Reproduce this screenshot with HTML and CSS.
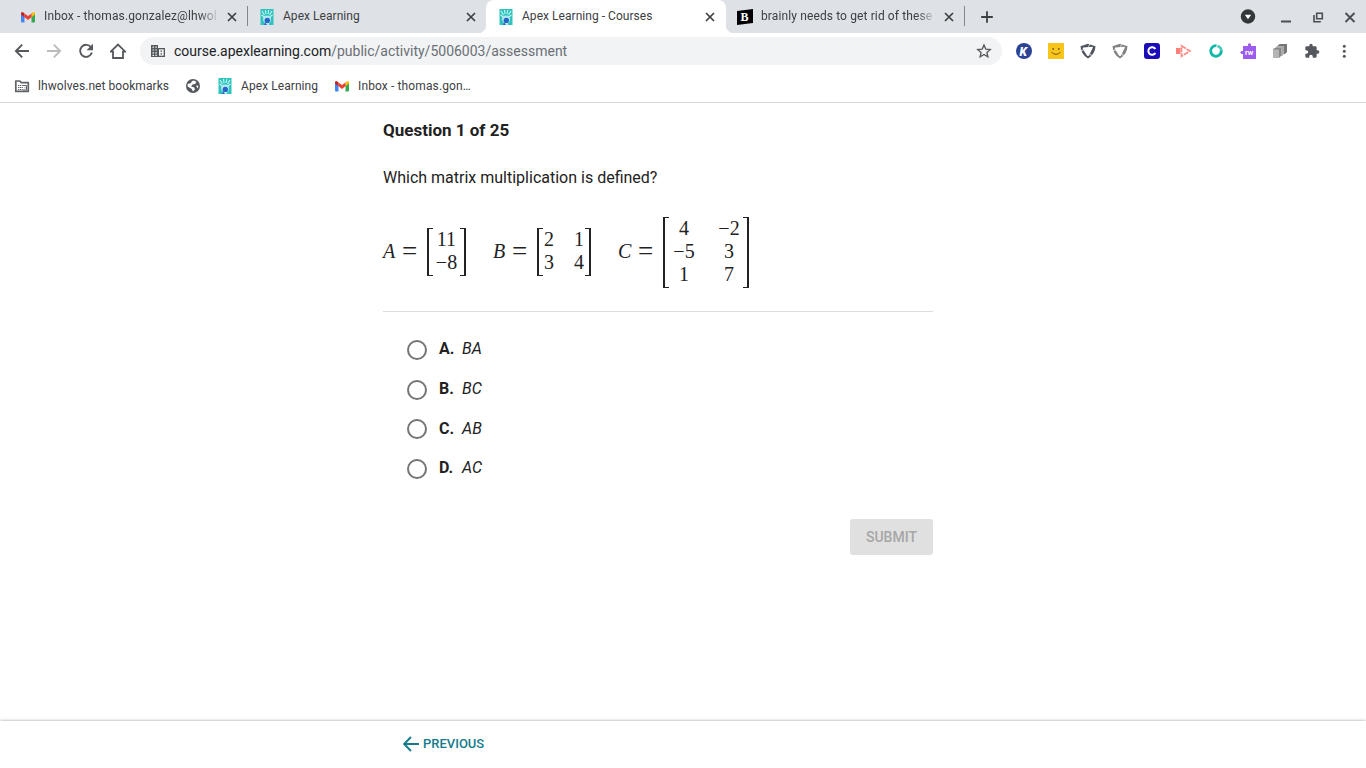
FILE: index.html
```html
<!DOCTYPE html>
<html lang="en">
<head>
  <meta charset="UTF-8" />
  <meta name="viewport" content="width=device-width, initial-scale=1.0" />
  <title>Apex Learning - Courses</title>
  <link rel="stylesheet" href="styles.css">
</head>
<body>

  <!-- Shared icons -->
  <svg class="icon-defs" width="0" height="0">
    <symbol id="close" viewBox="0 0 16 16">
      <path d="M4 4l8 8M12 4l-8 8" fill="none" stroke="currentColor" stroke-width="1.7" />
    </symbol>
    <symbol id="gmail" viewBox="0 0 16 16">
      <path d="M1 4.500v8q0 1 1 1h2.500V6.600z" fill="#4285f4" />
      <path d="M15 4.500v8q0 1-1 1h-2.500V6.600z" fill="#34a853" />
      <path d="M11.500 4.400L13 3.200q2-1 2 1.200v1.200l-3.500 2.700z" fill="#fbbc04" />
      <path d="M4.500 4.400L3 3.200q-2-1-2 1.200v1.200l3.500 2.700z" fill="#c5221f" />
      <path d="M4.500 4.400L8 7.100l3.500-2.700v3.900L8 11 4.500 8.300z" fill="#ea4335" />
    </symbol>
    <symbol id="apex" viewBox="0 0 16 16">
      <rect x="1.500" width="13" height="16" fill="#2ec4bd" />
      <path d="M3 2l2.500 4M6.500 1L7 5M13 2l-2.500 4M9.800 1L9 5M2.500 6l3 2M13.500 6l-3 2" stroke="#c9f7f3" stroke-width="1.100" />
      <path d="M4 10q0-3.500 4-3.500t4 3.500-2 4.500v1.500H5.500v-2.500Q4 12 4 10z" fill="#b5eaf0" />
      <circle cx="8.300" cy="11.400" r="2.700" fill="#2864c8" />
      <path d="M6 13l-1 3h3z" fill="#2864c8" />
    </symbol>
    <symbol id="shield" viewBox="0 0 16 16">
      <path d="M.5 3.200L8 .8l7.500 2.400Q15 11.500 8 15.500 1 11.500.5 3.200z" fill="currentColor" />
      <path d="M3.300 4.600l8.700-.9q1.200 0 .7 1.200L9 12.400q-1 1.300-2 0L2.800 6q-.5-1.100.5-1.400z" fill="#fff" />
      <path d="M10 .5L8.500 3.600M.5 7.600l3-.5M11.500 13.500l-1-2.600" stroke="#fff" stroke-width=".8" />
    </symbol>
  </svg>

  <!-- Tab strip -->
  <div class="tabs">
    <div class="tab tab-first">
      <svg class="icon"><use href="#gmail" /></svg>
      <span class="tab-title fade">Inbox - thomas.gonzalez@lhwol</span>
      <svg class="icon close"><use href="#close" /></svg>
    </div>
    <div class="tab tab-second">
      <svg class="icon"><use href="#apex" /></svg>
      <span class="tab-title">Apex Learning</span>
      <svg class="icon close"><use href="#close" /></svg>
    </div>
    <div class="tab active">
      <svg class="icon"><use href="#apex" /></svg>
      <span class="tab-title">Apex Learning - Courses</span>
      <svg class="icon close"><use href="#close" /></svg>
    </div>
    <div class="tab tab-last">
      <svg class="icon" viewBox="0 0 16 16">
        <path d="M0 2L16 0v14L0 16z" />
        <text x="3.600" y="12" class="logo-b">B</text>
      </svg>
      <span class="tab-title fade">brainly needs to get rid of these f</span>
      <svg class="icon close"><use href="#close" /></svg>
    </div>
    <svg class="icon new-tab" viewBox="0 0 16 16"><path d="M8 2.200v11.600M2.200 8h11.600" stroke="currentColor" stroke-width="1.800" /></svg>
    <div class="window-buttons">
      <svg class="icon" viewBox="0 0 16 16">
        <circle cx="8" cy="7.500" r="7.200" fill="#33363a" />
        <path d="M4.800 5.700h6.400L8 10.200z" fill="#fff" />
      </svg>
      <svg class="icon" viewBox="0 0 16 16"><path d="M3 12.500h10" stroke="currentColor" stroke-width="2" /></svg>
      <svg class="icon" viewBox="0 0 16 16">
        <path d="M6.700 4.200h5.600v5.600H6.700zM4 6v6.800h6.800" fill="none" stroke="currentColor" stroke-width="1.600" />
      </svg>
      <svg class="icon" viewBox="0 0 16 16"><path d="M3.500 4l9 9M12.500 4l-9 9" stroke="currentColor" stroke-width="1.900" /></svg>
    </div>
  </div>

  <!-- Toolbar -->
  <div class="toolbar">
    <div class="nav">
      <svg class="icon" viewBox="0 0 16 16"><path d="M15 8H2M8.200 1.700L1.900 8l6.300 6.300" fill="none" stroke="currentColor" stroke-width="1.900" /></svg>
      <svg class="icon disabled" viewBox="0 0 16 16"><path d="M1 8h13M7.800 1.700L14.100 8l-6.300 6.300" fill="none" stroke="currentColor" stroke-width="1.900" /></svg>
      <svg class="icon" viewBox="0 0 16 16">
        <path d="M13 4.300A6 6 0 1 0 13.900 9.500" fill="none" stroke="currentColor" stroke-width="1.900" />
        <path d="M15 .8v6.400H8.600z" fill="currentColor" />
      </svg>
      <svg class="icon" viewBox="0 0 16 16"><path d="M.7 8.700L8 1.500l7.300 7.200H13V15H3V8.700z" fill="none" stroke="currentColor" stroke-width="1.800" /></svg>
    </div>
    <div class="address">
      <svg class="icon site" viewBox="0 0 16 16">
        <path d="M1 2h7v3h7v9H1z" fill="currentColor" />
        <path d="M9 6.300h4.700v6.400H9z" fill="#f1f3f4" />
        <path d="M2.500 4.200h1.500M5.300 4.200h1.500M2.500 7h1.500M5.300 7h1.500M2.500 9.800h1.500M5.300 9.800h1.500M2.500 12.400h1.500M5.300 12.400h1.500" stroke="#f1f3f4" stroke-width="1.200" />
        <path d="M10.500 8.200H12M10.500 10.800H12" stroke="currentColor" stroke-width="1.300" />
      </svg>
      <span class="url">course.apexlearning.com<span class="path">/public/activity/5006003/assessment</span></span>
      <svg class="icon star" viewBox="0 0 16 16"><path d="M8 1.900l1.800 4.200 4.500.4-3.400 3 1 4.400L8 11.500l-3.900 2.400 1-4.400-3.400-3 4.500-.4z" fill="none" stroke="currentColor" stroke-width="1.300" /></svg>
    </div>
    <div class="extensions">
      <svg class="icon" viewBox="0 0 16 16">
        <circle cx="8" cy="8" r="8" fill="#2b4394" />
        <text x="3.600" y="12.500" class="logo-k">K</text>
      </svg>
      <svg class="icon" viewBox="0 0 16 16">
        <path d="M0 0h16v16H0z" fill="#f8c51c" />
        <circle cx="5.200" cy="6" r=".9" fill="#7a5a12" /><circle cx="10.800" cy="6" r=".9" fill="#7a5a12" />
        <path d="M3.500 9.200q4.500 4.300 9 0" fill="none" stroke="#7a5a12" />
      </svg>
      <svg class="icon shield-dark"><use href="#shield" /></svg>
      <svg class="icon shield-light"><use href="#shield" /></svg>
      <svg class="icon" viewBox="0 0 16 16">
        <rect width="16" height="16" rx="3" fill="#1b0bb8" />
        <path d="M11.400 6A3.800 3.800 0 1 0 11.400 10" fill="none" stroke="#fff" stroke-width="2" />
      </svg>
      <svg class="icon" viewBox="0 0 16 16">
        <path d="M0 5h4.500v6H0z" fill="#ff7f79" />
        <path d="M5.500 2.800L14 8l-8.500 5.200z" fill="none" stroke="#ff8a84" stroke-width="1.700" stroke-dasharray="5 1" />
      </svg>
      <svg class="icon" viewBox="0 0 16 16">
        <path d="M8.500 2.700A5.300 5.300 0 1 0 13.200 7" fill="none" stroke="#10b8a8" stroke-width="2.800" />
        <path d="M9.500 2.900a5.300 5.300 0 0 1 3.800 5" fill="none" stroke="#47c7bb" stroke-width="2.600" />
      </svg>
      <svg class="icon" viewBox="0 0 16 16">
        <path d="M3 3h5V1q1.500-1.500 3 0v2h5v13H3v-5H1.500Q-.8 9.500 1.500 8H3z" fill="#9d5cf0" />
        <text x="5" y="12" class="logo-rw">rw</text>
      </svg>
      <svg class="icon" viewBox="0 0 16 16">
        <path d="M6 2l2-1h7v8l-2 2H6z" fill="#777" />
        <path d="M3.500 4l2-1H12v8l-2 2H3.500z" fill="#aaa" />
        <path d="M1 6l2-1h6v8l-2 2H1z" fill="#888" />
        <path d="M1 6.500h6V15H1z" fill="#b5b5b5" />
      </svg>
      <svg class="icon" viewBox="0 0 24 24"><path d="M20.500 11H19V7c0-1.100-.9-2-2-2h-4V3.500a2.500 2.500 0 0 0-5 0V5H4c-1.100 0-2 .9-2 2v3.800h1.500a2.700 2.700 0 0 1 0 5.400H2V20c0 1.100.9 2 2 2h3.800v-1.500a2.700 2.700 0 0 1 5.400 0V22H17c1.100 0 2-.9 2-2v-4h1.500a2.500 2.500 0 0 0 0-5z" fill="currentColor" /></svg>
      <svg class="icon" viewBox="0 0 16 16"><g fill="currentColor"><circle cx="8.300" cy="3.200" r="1.500" /><circle cx="8.300" cy="8.200" r="1.500" /><circle cx="8.300" cy="13.200" r="1.500" /></g></svg>
    </div>
  </div>

  <!-- Bookmarks bar -->
  <div class="bookmarks">
    <span class="bookmark managed">
      <svg class="icon" viewBox="0 0 16 16">
        <path d="M1.800 3h4l1.500 1.600h7v8.800H1.800z" fill="none" stroke="currentColor" stroke-width="1.700" stroke-linejoin="round" />
        <path d="M4 7.500h4.800M4 9.500h4.800M4 11.500h4.800" stroke="currentColor" stroke-width="1.200" stroke-dasharray="1.200 .6" />
        <path d="M9 7.500h3.500V12H9M10.500 9.800h1" fill="none" stroke="currentColor" />
      </svg>
      lhwolves.net bookmarks
    </span>
    <span class="bookmark globe">
      <svg class="icon" viewBox="0 0 16 16">
        <circle cx="8" cy="8" r="7" fill="#54585c" />
        <path d="M9 2.500l2.500 1.500-1.500 2-2.500.5L6 8.500l3 .7 1 2-2 2.300-1.500-2.700L2.600 8.500V6L6 5l1-2zM11 7.500l2.500.2-.8 2.800z" fill="#fff" />
      </svg>
    </span>
    <span class="bookmark apex-mark"><svg class="icon"><use href="#apex" /></svg>Apex Learning</span>
    <span class="bookmark"><svg class="icon"><use href="#gmail" /></svg>Inbox - thomas.gon…</span>
  </div>

  <!-- Question -->
  <main class="content">
    <h1>Question 1 of 25</h1>
    <p class="question">Which matrix multiplication is defined?</p>

    <div class="equations">
      <div class="equation eq-a">
        <i>A</i><span class="equals">=</span>
        <div class="matrix"><span>11</span><span>−8</span></div>
      </div>
      <div class="equation eq-b">
        <i>B</i><span class="equals">=</span>
        <div class="matrix"><span>2</span><span>1</span><span>3</span><span>4</span></div>
      </div>
      <div class="equation eq-c">
        <i>C</i><span class="equals">=</span>
        <div class="matrix"><span>4</span><span>−2</span><span>−5</span><span>3</span><span>1</span><span>7</span></div>
      </div>
    </div>

    <div class="answers">
      <label class="answer"><input type="radio" name="answer" /><b>A.</b><i>BA</i></label>
      <label class="answer"><input type="radio" name="answer" /><b>B.</b><i>BC</i></label>
      <label class="answer"><input type="radio" name="answer" /><b>C.</b><i>AB</i></label>
      <label class="answer"><input type="radio" name="answer" /><b>D.</b><i>AC</i></label>
    </div>

    <button class="submit" disabled>SUBMIT</button>
  </main>

  <footer>
    <a class="previous">
      <svg class="icon" viewBox="0 0 16 16"><path d="M16 8H1.500M8 1L1.200 8 8 15" fill="none" stroke="currentColor" stroke-width="1.900" /></svg>
      PREVIOUS
    </a>
  </footer>

</body>
</html>
```
FILE: styles.css
```css
* {
  box-sizing: border-box;
}

body {
  margin: 0;
  height: 768px;
  display: flex;
  flex-direction: column;
  overflow: hidden;
  background: #fff;
  color: #222;
  font-family: Roboto, sans-serif;
}

.icon-defs {
  position: absolute;
}

.icon {
  width: 16px;
  height: 16px;
  flex: none;
}

/* Tab strip */
.tabs {
  display: flex;
  align-items: center;
  height: 33px;
  background: #dee1e6;
  color: #3c4043;
  font-size: 12px;
}

.tab {
  display: flex;
  align-items: center;
  gap: 8px;
  height: 33px;
  padding: 0 8px 0 12px;
  width: 240px;
}

.tab-first {
  width: 248px;
  padding-left: 20px;
  background: linear-gradient(#80868b, #80868b) right 6px / 1px 20px no-repeat;
}

.tab.active {
  background: #fff;
  border-radius: 8px 8px 0 0;
}

/* white feet where the active tab meets its neighbours */
.tab-second {
  width: 238px;
  padding: 0 7px 0 11px;
  background: radial-gradient(circle at 0 0, #dee1e6 8px, #fff 8.5px) right bottom / 8px 8px no-repeat;
}

.tab-last {
  width: 239px;
  padding-left: 11px;
  background:
    linear-gradient(#80868b, #80868b) right 6px / 1px 20px no-repeat,
    radial-gradient(circle at 100% 0, #dee1e6 8px, #fff 8.5px) left bottom / 8px 8px no-repeat;
}

.tab-title {
  flex: 1;
  white-space: nowrap;
  letter-spacing: 0.04px;
  line-height: 14px;
  padding-bottom: 1px;
}

.tab-title.fade {
  flex: none;
  width: 176px;
  margin-right: -4px;
  letter-spacing: 0.12px;
  -webkit-mask-image: linear-gradient(to right, #000 88%, transparent);
  mask-image: linear-gradient(to right, #000 88%, transparent);
}

.new-tab {
  margin-left: 14px;
}

.window-buttons {
  display: flex;
  gap: 16px;
  margin-left: auto;
  padding-right: 8px;
  color: #4b4e52;
}

.window-buttons .icon:first-child {
  margin-right: 6px;
}

/* Toolbar */
.toolbar {
  display: flex;
  align-items: center;
  height: 36px;
  color: #55585c;
}

.nav {
  display: flex;
  gap: 16px;
  width: 140px;
  padding-left: 14px;
}

.disabled {
  color: #babcbe;
}

.address {
  display: flex;
  align-items: center;
  width: 862px;
  height: 28px;
  padding: 0 10px;
  border-radius: 14px;
  background: #f1f3f4;
}

.url {
  flex: 1;
  margin-left: 8px;
  color: #202124;
  font-size: 14px;
}

.path {
  color: #6b6f74;
}

.extensions {
  display: flex;
  gap: 16px;
  margin-left: 14px;
}

.shield-dark {
  color: #50545f;
}

.shield-light {
  color: #818181;
}

.logo-b {
  fill: #fff;
  font: bold 12px "Liberation Serif", serif;
}

.logo-k {
  fill: #fff;
  font: italic 900 12px Roboto, sans-serif;
}

.logo-rw {
  fill: #fff;
  font: bold 7.5px Roboto, sans-serif;
}

/* Bookmarks bar */
.bookmarks {
  display: flex;
  align-items: center;
  height: 34px;
  padding-left: 14px;
  border-bottom: 1px solid #d5d7da;
  color: #3c4043;
  font-size: 12px;
  letter-spacing: 0.07px;
}

.bookmark {
  display: flex;
  align-items: center;
  gap: 8px;
  white-space: nowrap;
}

.bookmark:last-child {
  letter-spacing: 0.12px;
}

.bookmark .icon {
  color: #5f6368;
}

.managed {
  width: 171px;
}

.globe {
  width: 32px;
}

.apex-mark {
  width: 117px;
}

/* Question */
.content {
  flex: 1;
  display: flex;
  flex-direction: column;
  width: 550px;
  margin-left: 383px;
  font-size: 16px;
}

h1 {
  margin: 17px 0 0;
  font-size: 17px;
  line-height: 20px;
}

.question {
  margin: 28px 0 0;
  line-height: 20px;
}

.equations {
  display: flex;
  align-items: center;
  height: 124px;
  padding-top: 5px;
  border-bottom: 1px solid #ddd;
  font-family: "Liberation Serif", serif;
  font-size: 20px;
  line-height: 23px;
}

.equation {
  display: flex;
  align-items: center;
}

.equation > i {
  width: 19px;
  padding-bottom: 2px;
}

.equals {
  width: 25px;
  padding-bottom: 2px;
  font-size: 27px;
}

.matrix {
  display: grid;
  padding: 0 6px 2px;
  text-align: center;
  /* square brackets: two uprights and four short feet */
  background:
    linear-gradient(#222, #222) left / 2px 100% no-repeat,
    linear-gradient(#222, #222) right / 2px 100% no-repeat,
    linear-gradient(#222, #222) left top / 6px 1px no-repeat,
    linear-gradient(#222, #222) left bottom / 6px 1px no-repeat,
    linear-gradient(#222, #222) right top / 6px 1px no-repeat,
    linear-gradient(#222, #222) right bottom / 6px 1px no-repeat;
}

.eq-a {
  width: 110px;
}

.eq-b {
  width: 125px;
}

.eq-a .matrix {
  width: 39px;
}

.eq-b .matrix {
  width: 54px;
  padding-left: 7px;
  padding-right: 7px;
  grid-template-columns: 10px 10px;
  justify-content: space-between;
}

.eq-c .matrix {
  width: 86px;
  height: 71px;
  padding-left: 8px;
  padding-right: 7px;
  align-content: center;
  grid-template-columns: 26px 26px;
  justify-content: space-between;
}

.eq-c > i {
  width: 20px;
}

/* Answers */
.answers {
  display: flex;
  flex-direction: column;
  padding: 17px 0 0 24px;
}

.answer {
  display: flex;
  align-items: center;
  height: 39.700px;
}

.answer input {
  appearance: none;
  width: 20px;
  height: 20px;
  margin: 2px 12px 0 0;
  border: 2px solid #757575;
  border-radius: 50%;
}

.answer b {
  min-width: 23px;
}

.submit {
  align-self: flex-end;
  width: 83px;
  height: 36px;
  margin-top: 31px;
  padding: 0;
  border: none;
  border-radius: 3px;
  background: #e0e0e0;
  color: #a6a6a6;
  font: 500 14px Roboto, sans-serif;
}

/* Footer */
footer {
  display: flex;
  align-items: center;
  height: 47px;
  padding: 0 0 2px 403px;
  box-shadow: 0 0 3px rgba(0, 0, 0, 0.4);
}

.previous {
  display: flex;
  align-items: center;
  gap: 4px;
  color: #147c8c;
  font-size: 13px;
  font-weight: 500;
}
```
